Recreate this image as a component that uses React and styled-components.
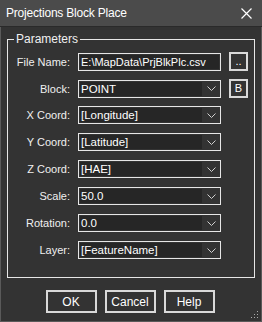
import React from "react";
import styled, { createGlobalStyle } from "styled-components";

const Global = createGlobalStyle`
  html, body { margin: 0; padding: 0; background: #333333; }
  body { font-family: "Liberation Sans", Arial, sans-serif; }
`;

const Window = styled.div`
  width: 262px;
  height: 322px;
  box-sizing: border-box;
  background: #333333;
  border: 1px solid #5a5a5a;
  border-top: none;
  display: flex;
  flex-direction: column;
  position: relative;
  color: #f0f0f0;
`;

const TitleBar = styled.div`
  height: 27px;
  flex: none;
  background: #4b4b4b;
  border-bottom: 1px solid #2a2a2a;
  display: flex;
  align-items: center;
  justify-content: space-between;
  padding: 0 10px 0 6px;
  box-sizing: border-box;
  font-size: 12px;
  color: #ffffff;
  margin: 0 -1px;
`;

const Title = styled.span`
  letter-spacing: -0.2px;
`;

const Close = styled.svg`
  width: 11px;
  height: 11px;
  display: block;
`;

const Body = styled.div`
  flex: 1;
  display: flex;
  flex-direction: column;
  padding: 5px 6px 0 6px;
`;

const Group = styled.fieldset`
  margin: 0;
  padding: 6px 0 0 0;
  border: 1px solid #e6e6e6;
  height: 246px;
  box-sizing: border-box;
  display: flex;
  flex-direction: column;
  gap: 9px;
`;

const Legend = styled.legend`
  font-size: 12px;
  padding: 0 2px;
  margin-left: 6px;
  color: #f0f0f0;
`;

const Row = styled.div`
  display: grid;
  grid-template-columns: 62px 143px 19px;
  column-gap: 8px;
  align-items: center;
  height: 18px;
`;

const Label = styled.label`
  font-size: 11px;
  text-align: right;
  color: #f0f0f0;
  white-space: nowrap;
`;

const TextField = styled.div`
  height: 18px;
  box-sizing: border-box;
  border: 1px solid #e6e6e6;
  background: #262626;
  font-size: 11px;
  line-height: 16px;
  padding: 0 2px;
  color: #ffffff;
  box-shadow: inset 0 0 0 1px #333;
  white-space: nowrap;
  overflow: hidden;
`;

const Combo = styled.div`
  height: 18px;
  box-sizing: border-box;
  border: 1px solid #e6e6e6;
  background: #333333;
  display: flex;
  align-items: stretch;
`;

const ComboText = styled.div`
  flex: 1;
  margin: 1px 0 1px 1px;
  background: #262626;
  font-size: 11.5px;
  line-height: 14px;
  padding: 0 1px;
  color: #ffffff;
  white-space: nowrap;
`;

const Arrow = styled.div`
  width: 18px;
  display: flex;
  align-items: center;
  justify-content: center;
`;

const SmallButton = styled.div`
  width: 19px;
  height: 19px;
  box-sizing: border-box;
  border: 2px solid #d9d9d9;
  background: #333333;
  color: #ffffff;
  font-size: 11px;
  display: flex;
  align-items: center;
  justify-content: center;
  line-height: 1;
`;

const Buttons = styled.div`
  display: flex;
  justify-content: center;
  gap: 8px;
  padding-top: 12px;
  padding-right: 2px;
`;

const Button = styled.div`
  width: 51px;
  height: 23px;
  box-sizing: border-box;
  border: 2px solid #d9d9d9;
  background: #333333;
  color: #ffffff;
  font-size: 12px;
  display: flex;
  align-items: center;
  justify-content: center;
`;

const Grip = styled.svg`
  position: absolute;
  right: 2px;
  bottom: 2px;
  width: 8px;
  height: 8px;
`;

const Chevron = () => (
  <svg width="9" height="5" viewBox="0 0 9 5">
    <path d="M0.5 0.5 L4.5 4.5 L8.5 0.5" fill="none" stroke="#d0d0d0" strokeWidth="1" />
  </svg>
);

const combos = [
  ["Block:", "POINT", "B"],
  ["X Coord:", "[Longitude]"],
  ["Y Coord:", "[Latitude]"],
  ["Z Coord:", "[HAE]"],
  ["Scale:", "50.0"],
  ["Rotation:", "0.0"],
  ["Layer:", "[FeatureName]"],
];

export default function App() {
  return (
    <>
      <Global />
      <Window>
        <TitleBar>
          <Title>Projections Block Place</Title>
          <Close viewBox="0 0 11 11">
            <path d="M0.5 0.5 L10.5 10.5 M10.5 0.5 L0.5 10.5" stroke="#ffffff" strokeWidth="1.2" />
          </Close>
        </TitleBar>
        <Body>
          <Group>
            <Legend>Parameters</Legend>
            <Row>
              <Label>File Name:</Label>
              <TextField>E:\MapData\PrjBlkPlc.csv</TextField>
              <SmallButton>..</SmallButton>
            </Row>
            {combos.map(([label, value, btn]) => (
              <Row key={label}>
                <Label>{label}</Label>
                <Combo>
                  <ComboText>{value}</ComboText>
                  <Arrow>
                    <Chevron />
                  </Arrow>
                </Combo>
                {btn ? <SmallButton>{btn}</SmallButton> : <span />}
              </Row>
            ))}
          </Group>
          <Buttons>
            <Button>OK</Button>
            <Button>Cancel</Button>
            <Button>Help</Button>
          </Buttons>
        </Body>
        <Grip viewBox="0 0 8 8">
          <g fill="#aaaaaa">
            <rect x="6" y="0" width="1" height="1" />
            <rect x="6" y="3" width="1" height="1" />
            <rect x="3" y="3" width="1" height="1" />
            <rect x="6" y="6" width="1" height="1" />
            <rect x="3" y="6" width="1" height="1" />
            <rect x="0" y="6" width="1" height="1" />
          </g>
        </Grip>
      </Window>
    </>
  );
}
